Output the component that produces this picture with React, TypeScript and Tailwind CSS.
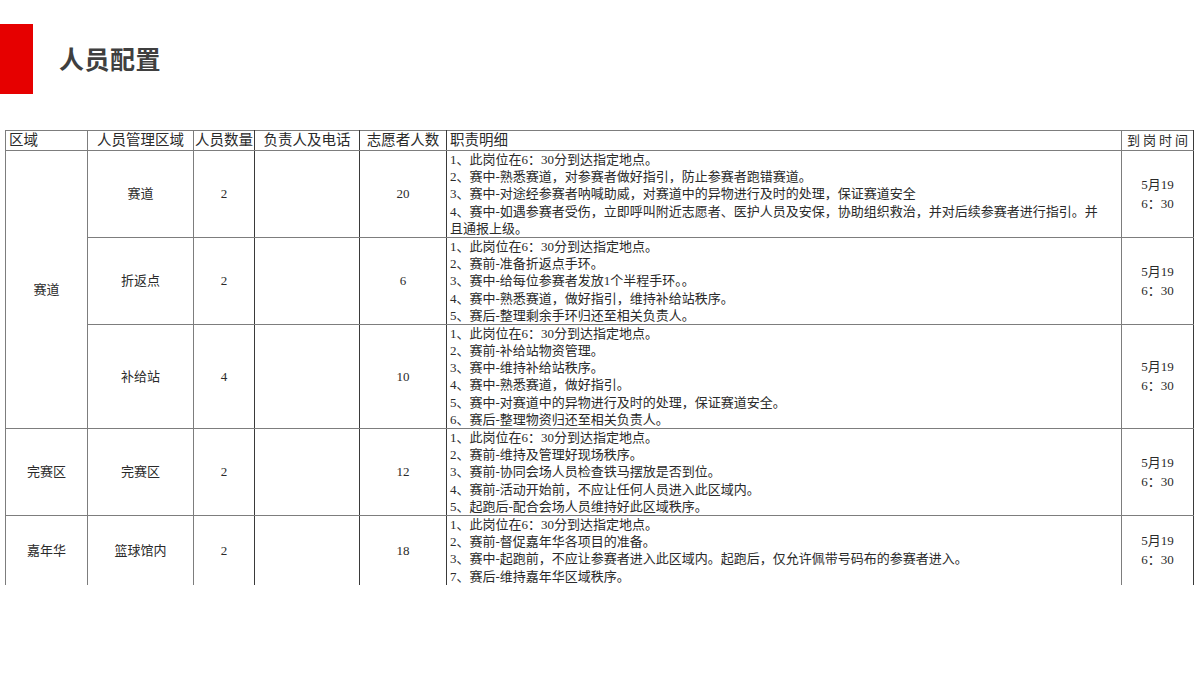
import React from 'react';

type Post = {
    name: string;
    count: string;
    volunteers: string;
    duties: string[];
};

type Zone = {
    zone: string;
    posts: Post[];
};

const zones: Zone[] = [
    {
        zone: '赛道',
        posts: [
            {
                name: '赛道',
                count: '2',
                volunteers: '20',
                duties: [
                    '1、此岗位在6：30分到达指定地点。',
                    '2、赛中-熟悉赛道，对参赛者做好指引，防止参赛者跑错赛道。',
                    '3、赛中-对途经参赛者呐喊助威，对赛道中的异物进行及时的处理，保证赛道安全',
                    '4、赛中-如遇参赛者受伤，立即呼叫附近志愿者、医护人员及安保，协助组织救治，并对后续参赛者进行指引。并',
                    '且通报上级。',
                ],
            },
            {
                name: '折返点',
                count: '2',
                volunteers: '6',
                duties: [
                    '1、此岗位在6：30分到达指定地点。',
                    '2、赛前-准备折返点手环。',
                    '3、赛中-给每位参赛者发放1个半程手环。。',
                    '4、赛中-熟悉赛道，做好指引，维持补给站秩序。',
                    '5、赛后-整理剩余手环归还至相关负责人。',
                ],
            },
            {
                name: '补给站',
                count: '4',
                volunteers: '10',
                duties: [
                    '1、此岗位在6：30分到达指定地点。',
                    '2、赛前-补给站物资管理。',
                    '3、赛中-维持补给站秩序。',
                    '4、赛中-熟悉赛道，做好指引。',
                    '5、赛中-对赛道中的异物进行及时的处理，保证赛道安全。',
                    '6、赛后-整理物资归还至相关负责人。',
                ],
            },
        ],
    },
    {
        zone: '完赛区',
        posts: [
            {
                name: '完赛区',
                count: '2',
                volunteers: '12',
                duties: [
                    '1、此岗位在6：30分到达指定地点。',
                    '2、赛前-维持及管理好现场秩序。',
                    '3、赛前-协同会场人员检查铁马摆放是否到位。',
                    '4、赛前-活动开始前，不应让任何人员进入此区域内。',
                    '5、起跑后-配合会场人员维持好此区域秩序。',
                ],
            },
        ],
    },
    {
        zone: '嘉年华',
        posts: [
            {
                name: '篮球馆内',
                count: '2',
                volunteers: '18',
                duties: [
                    '1、此岗位在6：30分到达指定地点。',
                    '2、赛前-督促嘉年华各项目的准备。',
                    '3、赛中-起跑前，不应让参赛者进入此区域内。起跑后，仅允许佩带号码布的参赛者进入。',
                    '7、赛后-维持嘉年华区域秩序。',
                ],
            },
        ],
    },
];

const cell = 'border border-[#7d7d7d] p-0 align-middle';
const dark = 'border border-[#7d7d7d] border-l-[#3a3a3a] border-r-[#3a3a3a] p-0 align-middle';

export default function App() {
    return (
        <div className="w-[1200px] h-[675px] bg-white overflow-hidden">
            {/* title bar */}
            <div className="flex items-center mt-[24px] h-[70px]">
                <div className="w-[33px] h-[70px] bg-[#e60000]" />
                <h1
                    className="ml-[26px] text-[25px] font-bold text-[#3f3f3f] tracking-[0.5px]"
                    style={{ fontFamily: '"Noto Sans CJK SC", sans-serif' }}
                >
                    人员配置
                </h1>
            </div>

            <div
                className="mt-[36px] ml-[5px] w-[1189px] h-[455px] overflow-hidden text-[13px] text-[#2a2a2a]"
                style={{ fontFamily: '"Liberation Serif", "Noto Sans CJK SC", serif' }}
            >
                <table className="w-[1188px] table-fixed border-collapse">
                    <colgroup>
                        <col className="w-[82px]" />
                        <col className="w-[106px]" />
                        <col className="w-[61px]" />
                        <col className="w-[105px]" />
                        <col className="w-[87px]" />
                        <col className="w-[675px]" />
                        <col className="w-[72px]" />
                    </colgroup>
                    <thead>
                        <tr className="h-[20px] text-[14.5px] leading-[19px]">
                            <th className={`${cell} text-left font-normal pl-[3px]`}>区域</th>
                            <th className={`${cell} text-center font-normal`}>人员管理区域</th>
                            <th className={`${dark} text-center font-normal whitespace-nowrap`}>人员数量</th>
                            <th className={`${dark} text-center font-normal`}>负责人及电话</th>
                            <th className={`${dark} text-center font-normal`}>志愿者人数</th>
                            <th className={`${cell} text-left font-normal pl-[3px]`}>职责明细</th>
                            <th className={`${dark} text-center font-normal text-[13px] tracking-[3px] pl-[3px]`}>到岗时间</th>
                        </tr>
                    </thead>
                    <tbody>
                        {zones.map((z) =>
                            z.posts.map((p, i) => (
                                <tr key={z.zone + p.name}>
                                    {i === 0 && (
                                        <td rowSpan={z.posts.length} className={`${cell} text-center`}>
                                            {z.zone}
                                        </td>
                                    )}
                                    <td className={`${cell} text-center`}>{p.name}</td>
                                    <td className={`${dark} text-center`}>{p.count}</td>
                                    <td className={dark}></td>
                                    <td className={`${dark} text-center`}>{p.volunteers}</td>
                                    <td className={`${cell} pl-[3px]`}>
                                        {p.duties.map((d, k) => (
                                            <div key={k} className="h-[17.2px] leading-[17.2px] whitespace-nowrap overflow-visible">
                                                {d}
                                            </div>
                                        ))}
                                    </td>
                                    <td className={`${dark} text-center`}>
                                        <div className="h-[19px] leading-[19px]">5月19</div>
                                        <div className="h-[19px] leading-[19px]">6：30</div>
                                    </td>
                                </tr>
                            ))
                        )}
                    </tbody>
                </table>
            </div>
        </div>
    );
}
